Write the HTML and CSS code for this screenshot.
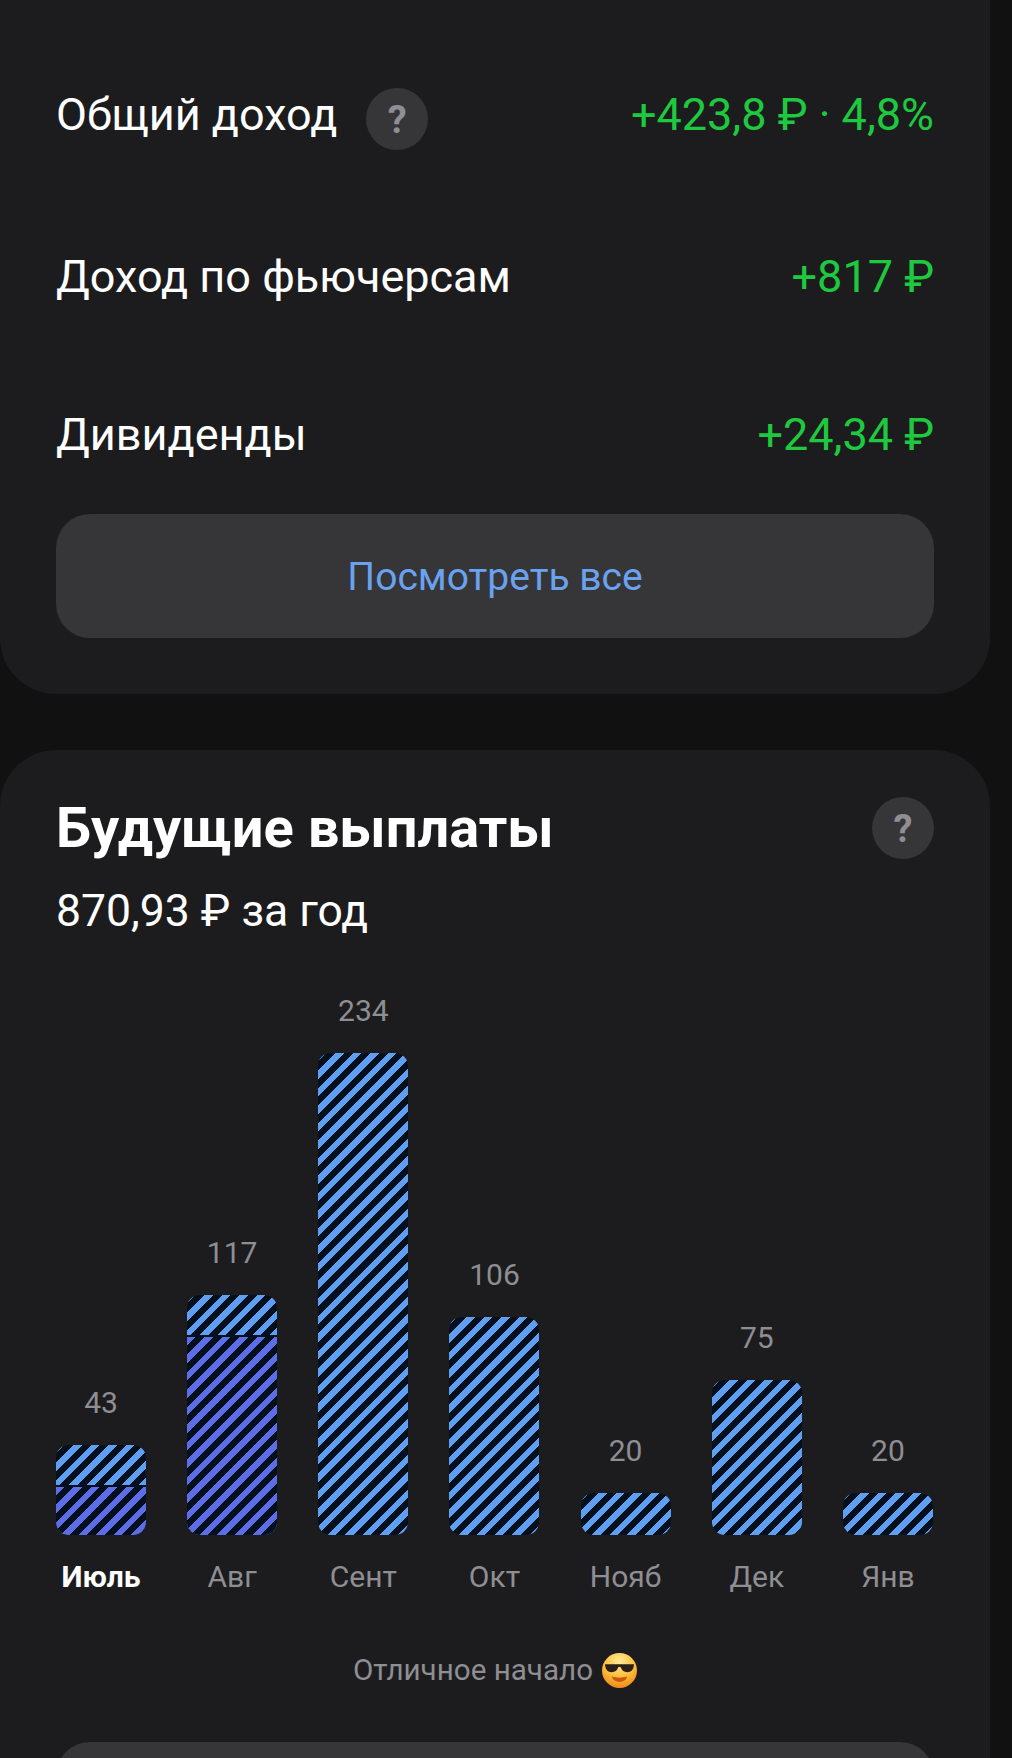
FILE: index.html
```html
<!DOCTYPE html>
<html lang="ru">
<head>
    <meta charset="UTF-8">
    <meta name="viewport" content="width=device-width, initial-scale=1.0">
    <title>Будущие выплаты</title>
    <link rel="stylesheet" href="styles.css">
</head>
<body>
    <div class="page">
        <section class="card card-income">
            <div class="row row-total">
                <div class="row-label">
                    <span>Общий доход</span>
                    <span class="help">?</span>
                </div>
                <span class="row-value">+423,8 ₽ · 4,8%</span>
            </div>
            <div class="row row-futures">
                <span>Доход по фьючерсам</span>
                <span class="row-value">+817 ₽</span>
            </div>
            <div class="row row-dividends">
                <span>Дивиденды</span>
                <span class="row-value">+24,34 ₽</span>
            </div>
            <button class="more-btn">Посмотреть все</button>
        </section>

        <section class="card card-payouts">
            <div class="payouts-head">
                <h2>Будущие выплаты</h2>
                <span class="help">?</span>
            </div>
            <p class="payouts-sum">870,93 ₽ за год</p>

            <div class="chart">
                <div class="col">
                    <span class="col-value">43</span>
                    <div class="bar" style="height: 90px"><div class="bar-paid" style="height: 48px"></div></div>
                    <span class="col-month col-current">Июль</span>
                </div>
                <div class="col">
                    <span class="col-value">117</span>
                    <div class="bar" style="height: 240px"><div class="bar-paid" style="height: 198px"></div></div>
                    <span class="col-month">Авг</span>
                </div>
                <div class="col">
                    <span class="col-value">234</span>
                    <div class="bar" style="height: 482px"></div>
                    <span class="col-month">Сент</span>
                </div>
                <div class="col">
                    <span class="col-value">106</span>
                    <div class="bar" style="height: 218px"></div>
                    <span class="col-month">Окт</span>
                </div>
                <div class="col">
                    <span class="col-value">20</span>
                    <div class="bar" style="height: 42px"></div>
                    <span class="col-month">Нояб</span>
                </div>
                <div class="col">
                    <span class="col-value">75</span>
                    <div class="bar" style="height: 155px"></div>
                    <span class="col-month">Дек</span>
                </div>
                <div class="col">
                    <span class="col-value">20</span>
                    <div class="bar" style="height: 42px"></div>
                    <span class="col-month">Янв</span>
                </div>
            </div>

            <p class="chart-note">
                Отличное начало
                <svg class="emoji" viewBox="0 0 36 36" aria-hidden="true">
                    <defs>
                        <radialGradient id="face" cx="50%" cy="25%" r="75%">
                            <stop offset="0" stop-color="#ffeb9a"/>
                            <stop offset="0.55" stop-color="#fdc13f"/>
                            <stop offset="1" stop-color="#ee8a1a"/>
                        </radialGradient>
                    </defs>
                    <circle cx="18" cy="18" r="18" fill="url(#face)"/>
                    <path d="M3 11.500h30l-.4 2.200c-.5 4-3 6-6.500 6-3.400 0-5.700-1.800-6.700-4.800-.4-.9-2.400-.9-2.800 0-1 3-3.300 4.800-6.700 4.800-3.500 0-6-2-6.500-6z" fill="#2a2018"/>
                    <path d="M10 24c5 2 11 2 16 0-1 3.800-4.200 5.800-8 5.800s-7-2-8-5.800z" fill="#c9560f"/>
                </svg>
            </p>

            <button class="more-btn"></button>
        </section>
    </div>
</body>
</html>
```

FILE: styles.css
```css
:root {
    --bg: #111112;
    --card-bg: #1c1c1e;
    --control: #363638;
    --text: #ffffff;
    --muted: #8e8e93;
    --green: #1fc93f;
    --link: #6aa2f0;
    --stripe-blue: #5f9ff2;
    --stripe-purple: #5d6de8;
    --stripe-dark: #04101e;
}

html, body {
    margin: 0;
    height: 1758px;
    overflow: hidden;
}

body {
    font-family: Roboto, 'Noto Sans', sans-serif;
    background-color: var(--bg);
    color: var(--text);
}

.page {
    width: 990px;
    display: flex;
    flex-direction: column;
    gap: 56px;
}

.card {
    background-color: var(--card-bg);
    padding: 0 56px 56px;
    border-radius: 56px;
}

.card-income {
    border-radius: 0 0 56px 56px;
    padding-top: 88px;
}

.row {
    display: flex;
    justify-content: space-between;
    align-items: center;
    font-size: 45px;
    line-height: 52px;
}

.row-total {
    align-items: flex-start;
    height: 62px;
    line-height: 54px;
}

.row-label {
    display: flex;
    align-items: flex-start;
    gap: 29px;
}

.row-futures {
    margin-top: 101px;
}

.row-dividends {
    margin-top: 106px;
}

.row-value {
    color: var(--green);
}

.help {
    width: 62px;
    height: 62px;
    flex: none;
    border-radius: 50%;
    background-color: var(--control);
    color: var(--muted);
    font-size: 38px;
    font-weight: 700;
    line-height: 65px;
    text-align: center;
}

.more-btn {
    display: block;
    width: 100%;
    height: 124px;
    margin-top: 53px;
    padding: 2px 0 0;
    border: none;
    border-radius: 34px;
    background-color: var(--control);
    color: var(--link);
    font-family: inherit;
    font-size: 39px;
}

.card-payouts {
    padding-top: 47px;
}

.payouts-head {
    display: flex;
    justify-content: space-between;
    align-items: center;
}

.payouts-head h2 {
    margin: 0;
    font-size: 56px;
    font-weight: 700;
    line-height: 62px;
}

.payouts-sum {
    margin: 26px 0 0;
    font-size: 44.500px;
    line-height: 52px;
}

.chart {
    display: flex;
    justify-content: space-between;
    align-items: flex-end;
    margin-top: 56px;
    padding-right: 1px;
}

.col {
    width: 90px;
    display: flex;
    flex-direction: column;
    align-items: center;
}

.col-value {
    margin-bottom: 24px;
    color: var(--muted);
    font-size: 30px;
    line-height: 36px;
}

.bar {
    width: 100%;
    display: flex;
    flex-direction: column;
    justify-content: flex-end;
    overflow: hidden;
    border-radius: 13px;
    background: repeating-linear-gradient(135deg, var(--stripe-blue) 0 6px, var(--stripe-dark) 6px 12.400px);
}

.bar-paid {
    border-top: 2px solid var(--stripe-dark);
    background: repeating-linear-gradient(135deg, var(--stripe-purple) 0 6px, var(--stripe-dark) 6px 12.400px);
}

.col-month {
    margin-top: 23px;
    color: var(--muted);
    font-size: 30px;
    line-height: 38px;
    white-space: nowrap;
}

.col-current {
    color: var(--text);
    font-weight: 700;
}

.chart-note {
    display: flex;
    justify-content: center;
    align-items: center;
    gap: 9px;
    margin: 56px 0 0;
    color: var(--muted);
    font-size: 29.600px;
    line-height: 36px;
}

.emoji {
    width: 35px;
    height: 35px;
}

.card-payouts .more-btn {
    margin-top: 54px;
}
```
